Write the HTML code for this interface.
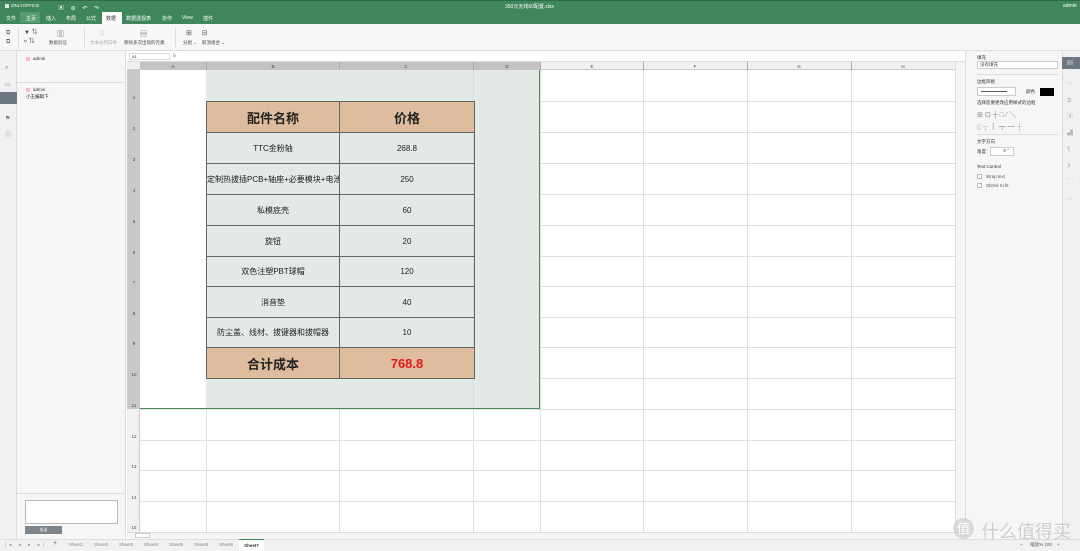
<!DOCTYPE html><html><head><meta charset="utf-8"><style>
*{margin:0;padding:0;box-sizing:border-box}
body{width:1080px;height:551px;overflow:hidden;position:relative;background:#fff;font-family:"Liberation Sans","Noto Sans CJK SC",sans-serif;font-size:5px;color:#333}
.a{position:absolute}
</style></head><body>
<div class="a" style="left:0;top:0;width:1080px;height:24px;background:#40865c"></div>
<div class="a" style="left:0;top:0;width:1080px;height:1px;background:#2e6b47"></div>
<div class="a" style="left:5px;top:4px;width:4px;height:4px;background:#fff;opacity:.8"></div>
<div class="a" style="left:11px;top:3px;color:#fff;font-size:4.5px">ONLYOFFICE</div>
<div class="a" style="left:58px;top:3px;color:#fff;font-size:6px">▣ &nbsp;&nbsp;&nbsp;⊜ &nbsp;&nbsp;&nbsp;↶ &nbsp;&nbsp;&nbsp;↷</div>
<div class="a" style="left:505px;top:3px;color:#fff;font-size:5px">350元无线60配置.xlsx</div>
<div class="a" style="left:1063px;top:3px;color:#fff;font-size:5px">admin</div>
<div class="a" style="left:20px;top:12px;width:20px;height:11px;background:#5a9a72"></div>
<div class="a" style="left:102px;top:12px;width:20px;height:12px;background:#fff"></div>
<div class="a" style="left:6px;top:15px;color:#fff;font-size:5px">文件</div>
<div class="a" style="left:26px;top:15px;color:#fff;font-size:5px">主页</div>
<div class="a" style="left:46px;top:15px;color:#fff;font-size:5px">插入</div>
<div class="a" style="left:66px;top:15px;color:#fff;font-size:5px">布局</div>
<div class="a" style="left:86px;top:15px;color:#fff;font-size:5px">公式</div>
<div class="a" style="left:106px;top:15px;color:#333;font-size:5px">数据</div>
<div class="a" style="left:126px;top:15px;color:#fff;font-size:5px">数据透视表</div>
<div class="a" style="left:162px;top:15px;color:#fff;font-size:5px">协作</div>
<div class="a" style="left:182px;top:15px;color:#fff;font-size:5px">View</div>
<div class="a" style="left:203px;top:15px;color:#fff;font-size:5px">插件</div>
<div class="a" style="left:0;top:24px;width:1080px;height:27px;background:#f7f7f7;border-bottom:1px solid #ddd"></div>
<div class="a" style="left:6px;top:29px;font-size:6px;color:#666;line-height:9px">⧉<br>⧉</div>
<div class="a" style="left:24px;top:29px;font-size:6px;color:#444;line-height:9px">▼ ⇅<br>▿ ⇅</div>
<div class="a" style="left:57px;top:29px;font-size:7px;color:#555">▥</div>
<div class="a" style="left:49px;top:40px;font-size:4.5px;color:#555">数据验证</div>
<div class="a" style="left:100px;top:29px;font-size:7px;color:#bbb">▯</div>
<div class="a" style="left:90px;top:40px;font-size:4.5px;color:#aaa">文本分列向导</div>
<div class="a" style="left:140px;top:29px;font-size:7px;color:#555">▤</div>
<div class="a" style="left:124px;top:40px;font-size:4.5px;color:#444">移除多次出现的元素</div>
<div class="a" style="left:175px;top:27px;width:1px;height:20px;background:#ddd"></div>
<div class="a" style="left:84px;top:27px;width:1px;height:20px;background:#ddd"></div>
<div class="a" style="left:18px;top:27px;width:1px;height:20px;background:#ddd"></div>
<div class="a" style="left:186px;top:29px;font-size:7px;color:#555">⊞ &nbsp;&nbsp;&nbsp;&nbsp;⊟</div>
<div class="a" style="left:183px;top:40px;font-size:4.5px;color:#444">分组 ⌄ &nbsp;&nbsp;&nbsp;取消组合 ⌄</div>
<div class="a" style="left:0;top:51px;width:17px;height:488px;background:#f1f1f1;border-right:1px solid #ddd"></div>
<div class="a" style="left:5px;top:60px;font-size:6px;color:#777;line-height:17px">⌕<br>▭<br><br>⚑<br>ⓘ</div>
<div class="a" style="left:0;top:92px;width:17px;height:12px;background:#6d7882"></div>
<div class="a" style="left:17px;top:51px;width:109px;height:488px;background:#f6f6f6;border-right:1px solid #ddd"></div>
<div class="a" style="left:17px;top:82px;width:109px;height:1px;background:#ddd"></div>
<div class="a" style="left:26px;top:57px;width:4px;height:4px;background:#f7b8d0"></div>
<div class="a" style="left:33px;top:56px;font-size:4.5px">admin</div>
<div class="a" style="left:26px;top:88px;width:4px;height:4px;background:#f7b8d0"></div>
<div class="a" style="left:33px;top:87px;font-size:4.5px">admin</div>
<div class="a" style="left:26px;top:94px;font-size:4.5px;color:#222">小王编辑下</div>
<div class="a" style="left:17px;top:493px;width:109px;height:1px;background:#ddd"></div>
<div class="a" style="left:25px;top:500px;width:93px;height:24px;background:#fff;border:1px solid #bbb"></div>
<div class="a" style="left:25px;top:526px;width:37px;height:8px;background:#7d858c;color:#fff;font-size:4px;text-align:center;line-height:8px">发送</div>
<div class="a" style="left:127px;top:51px;width:838px;height:11px;background:#fff;border-bottom:1px solid #ddd"></div>
<div class="a" style="left:129px;top:53px;width:41px;height:7px;border:1px solid #ddd;font-size:4px;padding-left:2px">A1</div>
<div class="a" style="left:173px;top:53px;font-size:4.5px;color:#777">fx</div>
<div class="a" style="left:127px;top:62px;width:838px;height:8px;background:#f1f1f1;border-bottom:1px solid #ccc"></div>
<div class="a" style="left:140px;top:62px;width:400px;height:8px;background:#c3c3c3"></div>
<div class="a" style="left:127px;top:70px;width:13px;height:462px;background:#f1f1f1;border-right:1px solid #ccc"></div>
<div class="a" style="left:127px;top:70px;width:13px;height:339px;background:#c8c8c8"></div>
<svg class="a" style="left:127px;top:62px" width="838" height="470">
<g stroke="#e0e0e0" stroke-width="1">
<line x1="79.5" y1="8" x2="79.5" y2="470"/><line x1="212.5" y1="8" x2="212.5" y2="470"/><line x1="346.5" y1="8" x2="346.5" y2="470"/><line x1="413.5" y1="8" x2="413.5" y2="470"/><line x1="516.5" y1="8" x2="516.5" y2="470"/><line x1="620.5" y1="8" x2="620.5" y2="470"/><line x1="724.5" y1="8" x2="724.5" y2="470"/><line x1="828.5" y1="8" x2="828.5" y2="470"/>
<line x1="13" y1="39.5" x2="838" y2="39.5"/><line x1="13" y1="70.5" x2="838" y2="70.5"/><line x1="13" y1="101.5" x2="838" y2="101.5"/><line x1="13" y1="132.5" x2="838" y2="132.5"/><line x1="13" y1="163.5" x2="838" y2="163.5"/><line x1="13" y1="194.5" x2="838" y2="194.5"/><line x1="13" y1="224.5" x2="838" y2="224.5"/><line x1="13" y1="255.5" x2="838" y2="255.5"/><line x1="13" y1="285.5" x2="838" y2="285.5"/><line x1="13" y1="316.5" x2="838" y2="316.5"/><line x1="13" y1="347.5" x2="838" y2="347.5"/><line x1="13" y1="378.5" x2="838" y2="378.5"/><line x1="13" y1="408.5" x2="838" y2="408.5"/><line x1="13" y1="439.5" x2="838" y2="439.5"/>
</g>
<g stroke="#aaa"><line x1="79.5" y1="0" x2="79.5" y2="8"/><line x1="212.5" y1="0" x2="212.5" y2="8"/><line x1="346.5" y1="0" x2="346.5" y2="8"/><line x1="413.5" y1="0" x2="413.5" y2="8"/><line x1="516.5" y1="0" x2="516.5" y2="8"/><line x1="620.5" y1="0" x2="620.5" y2="8"/><line x1="724.5" y1="0" x2="724.5" y2="8"/><line x1="828.5" y1="0" x2="828.5" y2="8"/></g>
<g font-size="4.5" fill="#444" text-anchor="middle" font-family="Liberation Sans">
<text x="46" y="6">A</text><text x="146" y="6">B</text><text x="279" y="6">C</text><text x="380" y="6">D</text><text x="465" y="6">E</text><text x="568" y="6">F</text><text x="672" y="6">G</text><text x="776" y="6">H</text>
<text x="7" y="37">1</text><text x="7" y="68">2</text><text x="7" y="99">3</text><text x="7" y="130">4</text><text x="7" y="161">5</text><text x="7" y="192">6</text><text x="7" y="222">7</text><text x="7" y="253">8</text><text x="7" y="283">9</text><text x="7" y="314">10</text><text x="7" y="345">11</text><text x="7" y="376">12</text><text x="7" y="406">13</text><text x="7" y="437">14</text><text x="7" y="467">15</text>
</g></svg>
<div class="a" style="left:140px;top:70px;width:66px;height:339px;background:#fff"></div>
<div class="a" style="left:206px;top:70px;width:334px;height:339px;background:#e3e9e5"></div>
<div class="a" style="left:473px;top:70px;width:1px;height:339px;background:#d4dad6"></div>
<div class="a" style="left:140px;top:70px;width:400px;height:339px;border:1px solid #4a8a5e;border-top:none;border-left:none"></div>
<table class="a" style="left:206px;top:101px;width:268px;border-collapse:collapse;font-size:8px;text-align:center;color:#222;table-layout:fixed">
<colgroup><col style="width:133px"><col style="width:135px"></colgroup>
<tr style="height:31px;background:#dfbc9e;font-weight:bold;font-size:13px"><td style="border:1px solid #666">配件名称</td><td style="border:1px solid #666">价格</td></tr>
<tr style="height:31px"><td style="border:1px solid #666">TTC金粉轴</td><td style="border:1px solid #666">268.8</td></tr>
<tr style="height:31px"><td style="border:1px solid #666;white-space:nowrap;overflow:hidden">定制热拔插PCB+轴座+必要模块+电池</td><td style="border:1px solid #666">250</td></tr>
<tr style="height:31px"><td style="border:1px solid #666">私模底壳</td><td style="border:1px solid #666">60</td></tr>
<tr style="height:31px"><td style="border:1px solid #666">旋钮</td><td style="border:1px solid #666">20</td></tr>
<tr style="height:30px"><td style="border:1px solid #666">双色注塑PBT球帽</td><td style="border:1px solid #666">120</td></tr>
<tr style="height:31px"><td style="border:1px solid #666">消音垫</td><td style="border:1px solid #666">40</td></tr>
<tr style="height:30px"><td style="border:1px solid #666">防尘盖、线材、拔键器和拔帽器</td><td style="border:1px solid #666">10</td></tr>
<tr style="height:31px;background:#dfbc9e;font-weight:bold;font-size:13px"><td style="border:1px solid #666">合计成本</td><td style="border:1px solid #666;color:#e8191e">768.8</td></tr>
</table>
<div class="a" style="left:955px;top:62px;width:10px;height:470px;background:#f5f5f5;border-left:1px solid #ddd"></div>
<div class="a" style="left:127px;top:532px;width:838px;height:7px;background:#f5f5f5;border-top:1px solid #ddd"></div>
<div class="a" style="left:135px;top:533px;width:15px;height:5px;background:#fff;border:1px solid #ccc"></div>
<div class="a" style="left:965px;top:51px;width:97px;height:488px;background:#f6f6f6;border-left:1px solid #ddd"></div>
<div class="a" style="left:977px;top:55px;font-size:4.5px">填充</div>
<div class="a" style="left:977px;top:61px;width:81px;height:8px;background:#fff;border:1px solid #ccc;font-size:4.5px;padding-left:2px">没有填充</div>
<div class="a" style="left:977px;top:74px;width:81px;height:1px;background:#ddd"></div>
<div class="a" style="left:977px;top:79px;font-size:4.5px">边框风格</div>
<div class="a" style="left:977px;top:87px;width:39px;height:9px;background:#fff;border:1px solid #ccc"></div>
<div class="a" style="left:981px;top:91px;width:26px;height:1px;background:#555"></div>
<div class="a" style="left:1026px;top:89px;font-size:4.5px">颜色</div>
<div class="a" style="left:1040px;top:88px;width:14px;height:8px;background:#000"></div>
<div class="a" style="left:977px;top:100px;font-size:4.5px">选择您要更改应用样式的边框</div>
<div class="a" style="left:977px;top:110px;font-size:7px;color:#888;letter-spacing:2px">⊞⊡┼□⁄╲</div>
<div class="a" style="left:977px;top:122px;font-size:7px;color:#aaa;letter-spacing:2px">▯┬┃┳━┼</div>
<div class="a" style="left:977px;top:134px;width:81px;height:1px;background:#ddd"></div>
<div class="a" style="left:977px;top:139px;font-size:4.5px">文字方向</div>
<div class="a" style="left:977px;top:149px;font-size:4.5px">角度</div>
<div class="a" style="left:990px;top:147px;width:24px;height:9px;background:#fff;border:1px solid #ccc;font-size:4.5px;text-align:right;padding-right:4px">0 °</div>
<div class="a" style="left:977px;top:164px;font-size:4.5px">Text Control</div>
<div class="a" style="left:977px;top:174px;width:5px;height:5px;background:#fff;border:1px solid #bbb"></div>
<div class="a" style="left:986px;top:174px;font-size:4.5px;color:#555">Wrap text</div>
<div class="a" style="left:977px;top:183px;width:5px;height:5px;background:#fff;border:1px solid #bbb"></div>
<div class="a" style="left:986px;top:183px;font-size:4.5px;color:#555">Shrink to fit</div>
<div class="a" style="left:1062px;top:51px;width:18px;height:488px;background:#f1f1f1;border-left:1px solid #ddd"></div>
<div class="a" style="left:1062px;top:57px;width:18px;height:12px;background:#6d7882"></div>
<div class="a" style="left:1067px;top:58px;font-size:6px;color:#fff">▤</div>
<div class="a" style="left:1067px;top:76px;font-size:6px;color:#bbb;line-height:16.5px">▭<br>⧉<br>▣<br>▟<br>¶<br>⁋<br>⬚<br>▱</div>
<div class="a" style="left:0;top:539px;width:1080px;height:12px;background:#f1f1f1;border-top:1px solid #ddd"></div>
<div class="a" style="left:5px;top:542px;font-size:4.5px;color:#888;letter-spacing:3px">|◂ ◂ ▸ ▸|</div>
<div class="a" style="left:53px;top:540px;font-size:7px;color:#666">+</div>
<div class="a" style="left:69px;top:542px;font-size:4.5px;color:#888">Sheet1</div>
<div class="a" style="left:94px;top:542px;font-size:4.5px;color:#888">Sheet2</div>
<div class="a" style="left:119px;top:542px;font-size:4.5px;color:#888">Sheet3</div>
<div class="a" style="left:144px;top:542px;font-size:4.5px;color:#888">Sheet4</div>
<div class="a" style="left:169px;top:542px;font-size:4.5px;color:#888">Sheet5</div>
<div class="a" style="left:194px;top:542px;font-size:4.5px;color:#888">Sheet8</div>
<div class="a" style="left:219px;top:542px;font-size:4.5px;color:#888">Sheet6</div>
<div class="a" style="left:239px;top:539px;width:25px;height:12px;background:#fff;border-top:1px solid #40865c;font-size:4.5px;text-align:center;line-height:11px;font-weight:bold">Sheet7</div>
<div class="a" style="left:1020px;top:542px;font-size:4.5px;color:#555">−&nbsp;&nbsp;&nbsp;&nbsp;&nbsp;&nbsp;缩放% 100 &nbsp;&nbsp;&nbsp;+</div>
<div class="a" style="left:953px;top:518px;width:21px;height:21px;border-radius:50%;background:rgba(200,200,200,.6);color:#fff;font-size:13px;text-align:center;line-height:21px">值</div>
<div class="a" style="left:981px;top:518px;font-size:18px;color:rgba(200,200,200,.85)">什么值得买</div>
</body></html>
